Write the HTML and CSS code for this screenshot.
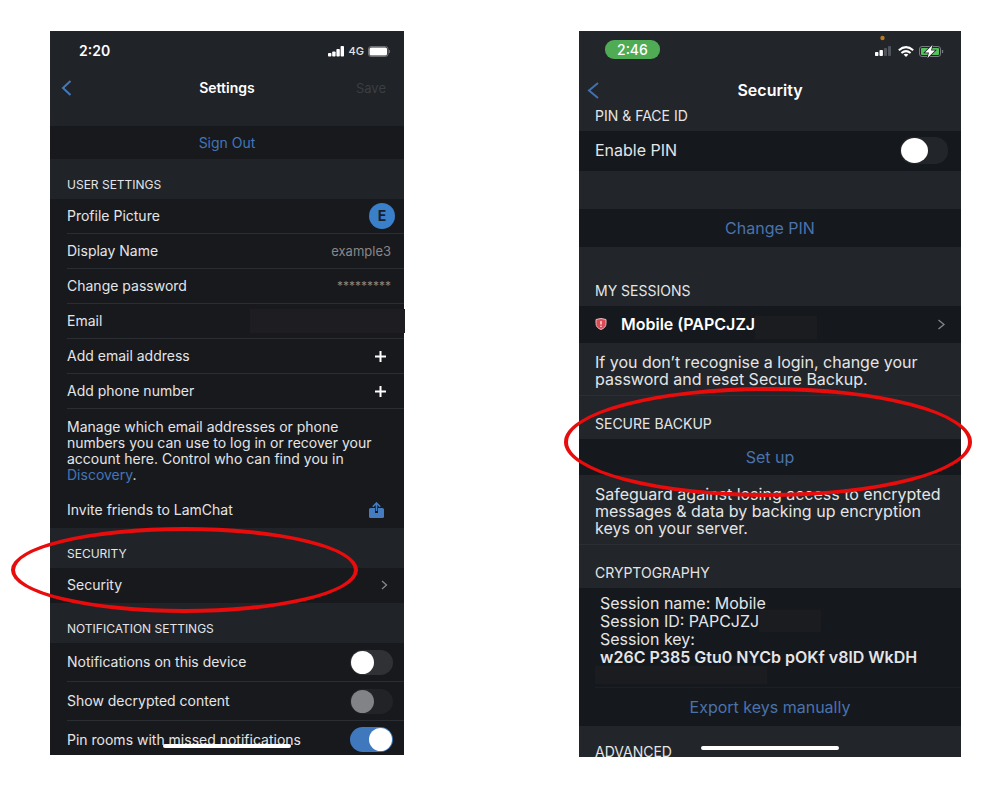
FILE: index.html
```
<!DOCTYPE html>
<html lang="en">
<head>
<meta charset="utf-8">
<meta name="viewport" content="width=device-width, initial-scale=1">
<title>Set up secure backup</title>
<link rel="stylesheet" href="styles.css">
</head>
<body>
<main class="guide">

  <section class="phone phone-settings" aria-label="Settings">
    <header class="top">
      <div class="status">
        <span class="clock">2:20</span>
        <span class="status-icons">
          <svg width="17" height="11" viewBox="0 0 17 11" fill="#fff" aria-hidden="true"><rect x="0" y="7" width="3.400" height="3.500" rx=".8"/><rect x="4.200" y="5.500" width="3.400" height="5" rx=".8"/><rect x="8.400" y="3" width="3.400" height="7.500" rx=".8"/><rect x="12.600" y="0" width="3.400" height="10.500" rx=".8"/></svg>
          <span class="network">4G</span>
          <svg width="23" height="11" viewBox="0 0 23 11" aria-hidden="true"><rect x=".5" y=".5" width="19.500" height="10" rx="2.500" fill="none" stroke="#6c6f72"/><rect x="1.500" y="1.500" width="17.500" height="8" rx="1.500" fill="#fff"/><path d="M21.300 4v3" stroke="#6c6f72" stroke-width="1.200"/></svg>
        </span>
      </div>
      <nav class="bar">
        <button class="plain back" aria-label="Back"><svg width="11" height="16" viewBox="0 0 11 16" fill="none" stroke="#4479ba" stroke-width="2"><path d="M9.500 1 2 8l7.500 7"/></svg></button>
        <h1 class="title">Settings</h1>
        <button class="plain save" disabled>Save</button>
      </nav>
    </header>
    <button class="plain action">Sign Out</button>

    <h2 class="heading">USER SETTINGS</h2>
    <div class="list">
      <div class="row"><span>Profile Picture</span><span class="avatar">E</span></div>
      <div class="row"><span>Display Name</span><span class="value">example3</span></div>
      <div class="row"><span>Change password</span><span class="value stars">*********</span></div>
      <div class="row"><span>Email</span><span class="hidden-email"></span></div>
      <button class="plain row"><span>Add email address</span><svg class="plus" width="11" height="11" viewBox="0 0 11 11" stroke="#fff" stroke-width="2" aria-hidden="true"><path d="M5.500 0v11M0 5.500h11"/></svg></button>
      <button class="plain row"><span>Add phone number</span><svg class="plus" width="11" height="11" viewBox="0 0 11 11" stroke="#fff" stroke-width="2" aria-hidden="true"><path d="M5.500 0v11M0 5.500h11"/></svg></button>
      <p class="note">Manage which email addresses or phone numbers you can use to log in or recover your account here. Control who can find you in <a class="link" href="#discovery">Discovery</a>.</p>
      <button class="plain row last"><span>Invite friends to LamChat</span><svg class="share" width="15" height="16" viewBox="0 0 15 16" aria-hidden="true"><rect x="0" y="6" width="15" height="10" rx="1.500" fill="#447cbf"/><path d="M7.500 5v6" stroke="#18191d" stroke-width="3"/><path d="M7.500 9V1.500M3.800 4.800 7.500 1l3.700 3.800" fill="none" stroke="#447cbf" stroke-width="1.600"/></svg></button>
    </div>

    <div class="circled">
      <h2 class="heading">SECURITY</h2>
      <div class="list"><button class="plain row last"><span>Security</span><svg class="chevron" width="7" height="10" viewBox="0 0 7 10" fill="none" stroke="#85888b" stroke-width="1.300" aria-hidden="true"><path d="m1 1 4.500 4L1 9"/></svg></button></div>
      <span class="ring ring-security"></span>
    </div>

    <h2 class="heading">NOTIFICATION SETTINGS</h2>
    <div class="list toggles">
      <label class="row"><span>Notifications on this device</span><input class="switch" type="checkbox" role="switch"></label>
      <label class="row"><span>Show decrypted content</span><input class="switch" type="checkbox" role="switch" disabled></label>
      <label class="row last"><span>Pin rooms with missed notifications</span><input class="switch" type="checkbox" role="switch" checked></label>
    </div>
    <span class="home"></span>
  </section>

  <section class="phone phone-security" aria-label="Security">
    <header class="top">
      <div class="status">
        <span class="clock pill">2:46</span>
        <span class="status-icons">
          <svg width="18" height="22" viewBox="0 0 18 22" aria-hidden="true"><circle cx="7.500" cy="3" r="2.200" fill="#b87a22"/><rect x="0" y="17" width="3.400" height="4" rx=".8" fill="#fff"/><rect x="4.500" y="15" width="3.400" height="6" rx=".8" fill="#fff"/><rect x="9" y="13" width="3" height="8" rx=".8" fill="#50545a"/><rect x="13" y="11" width="3" height="10" rx=".8" fill="#50545a"/></svg>
          <svg width="16" height="11" viewBox="0 0 16 11" fill="none" stroke="#fff" stroke-width="2" aria-hidden="true"><path d="M.8 4.200q7.200-6.100 14.400 0M3.400 7q4.600-3.800 9.200 0"/><path d="M5.600 8.600q2.400-1.800 4.800 0L8 11z" fill="#fff" stroke="none"/></svg>
          <svg width="25" height="13" viewBox="0 0 25 13" aria-hidden="true"><rect x=".5" y="1.500" width="21" height="10" rx="2.500" fill="none" stroke="#777b80"/><rect x="2" y="3" width="18" height="7" rx="1" fill="#55c35c"/><path d="M23.500 5v3" stroke="#777b80" stroke-width="1.300"/><path d="m13.500 0-7.500 7.500h4L8.500 13l7.500-7.500h-4z" fill="#fff" stroke="#22262b" stroke-width="1.600" paint-order="stroke"/></svg>
        </span>
      </div>
      <nav class="bar">
        <button class="plain back" aria-label="Back"><svg width="12" height="17" viewBox="0 0 12 17" fill="none" stroke="#4470ac" stroke-width="2"><path d="M11 1 2 8.500l9 7.500"/></svg></button>
        <h1 class="title">Security</h1>
      </nav>
    </header>
    <h2 class="heading heading-first">PIN &amp; FACE ID</h2>
    <div class="list pin-row"><label class="row last"><span>Enable PIN</span><input class="switch" type="checkbox" role="switch"></label></div>
    <button class="plain action spaced">Change PIN</button>

    <h2 class="heading heading-tall">MY SESSIONS</h2>
    <div class="list"><button class="plain row session last">
      <svg width="12" height="12" viewBox="0 0 12 12" aria-hidden="true"><path d="M1 1.500Q6-.5 11 1.500v4Q11 9.800 6 11.500 1 9.800 1 5.500z" fill="#dd4a55" stroke="#e4b9bc"/><path d="M6 3v3.500M6 7.800v1.200" stroke="#fff" stroke-width="1.200"/></svg>
      <strong>Mobile (PAPCJZJ</strong><span class="mask mask-name"></span>
      <svg class="chevron" width="7" height="11" viewBox="0 0 7 11" fill="none" stroke="#85888b" stroke-width="1.300" aria-hidden="true"><path d="m.5 1 5.500 4.500L.5 10"/></svg>
    </button></div>
    <p class="note">If you don’t recognise a login, change your password and reset Secure Backup.</p>

    <div class="circled">
      <h2 class="heading">SECURE BACKUP</h2>
      <button class="plain action">Set up</button>
      <span class="ring ring-backup"></span>
    </div>
    <p class="note">Safeguard against losing access to encrypted messages &amp; data by backing up encryption keys on your server.</p>

    <h2 class="heading">CRYPTOGRAPHY</h2>
    <div class="list">
      <div class="details">
        <p class="detail">Session name: Mobile</p>
        <p class="detail">Session ID: PAPCJZJ<span class="mask mask-id"></span></p>
        <p class="detail">Session key:</p>
        <p class="detail"><strong>w26C P385 Gtu0 NYCb pOKf v8lD WkDH</strong></p>
        <span class="mask mask-key"></span>
      </div>
      <button class="plain action">Export keys manually</button>
    </div>
    <h2 class="heading heading-end">ADVANCED</h2>
    <span class="home"></span>
  </section>

</main>
</body>
</html>
```
FILE: styles.css
```
* { box-sizing: border-box; }

body {
  margin: 0;
  background: #fff;
  font-family: Inter, "Liberation Sans", sans-serif;
}

h1, h2, p { margin: 0; font-weight: 400; }

.guide {
  display: grid;
  grid-template-columns: 354fr 382fr;
  column-gap: 175px;
  align-items: start;
  padding: 31px 44px 32px 50px;
}

.phone {
  position: relative;
  background: var(--panel);
  color: #e4e5e7;
  font-size: var(--text);
  line-height: var(--line);
}

.phone-settings {
  --panel: #202327;
  --row: #18191d;
  --rule: #2a2d31;
  --accent: #4276b7;
  --inset: 17px;
  --text: 14px;
  --line: 16px;
}

.phone-security {
  --panel: #22252a;
  --row: #15181d;
  --rule: #2b2e33;
  --accent: #4a73ac;
  --inset: 16px;
  --text: 16px;
  --line: 17px;
}

.plain {
  border: 0;
  padding: 0;
  background: none;
  color: inherit;
  font: inherit;
  text-align: left;
}

/* Status and navigation bars */
.top { display: flex; flex-direction: column; }
.status { display: flex; justify-content: space-between; align-items: center; height: 40px; padding: 0 13px 0 29px; }
.clock { font-size: 14px; font-weight: 600; color: #fff; }
.status-icons { display: flex; align-items: center; gap: 4px; }
.network { font-size: 11px; font-weight: 500; }

.bar { display: grid; grid-template-columns: 1fr auto 1fr; align-items: center; height: 33px; padding: 0 11px; }
.phone-settings .bar { margin-bottom: 22px; }
.back { display: flex; }
.title { font-size: var(--text); line-height: var(--line); font-weight: 600; color: #fff; }
.save { justify-self: end; margin-right: 7px; color: #3b3e42; font-size: 13px; }

.phone-security .status { padding: 0 17px 0 26px; }
.phone-security .status-icons { gap: 5px; }
.phone-security .status-icons svg:first-child { margin-bottom: 10px; }
.phone-security .bar { height: 39px; padding: 0 8px; }
.pill { margin-bottom: 4px; padding: 1px 12px; border-radius: 9px; background: #50ab55; font-weight: 500; }

/* Section parts */
.heading {
  display: flex;
  align-items: flex-end;
  height: 40px;
  padding: 0 var(--inset) 6px;
  font-size: 12px;
}
.list { background: var(--row); }
.row {
  display: flex;
  align-items: center;
  justify-content: space-between;
  width: calc(100% - var(--inset));
  height: 35px;
  margin-left: var(--inset);
  border-bottom: 1px solid var(--rule);
}
.row.last { border-bottom-color: transparent; }
.action {
  display: block;
  width: 100%;
  height: 33px;
  background: var(--row);
  color: var(--accent);
  text-align: center;
}
.link { color: var(--accent); text-decoration: none; }
.value { margin-right: 13px; color: #85888c; font-size: 13px; }
.stars { font-size: 12px; }
.avatar {
  width: 26px;
  height: 26px;
  margin-right: 9px;
  border-radius: 50%;
  background: #397fc9;
  color: #18202c;
  font-weight: 700;
  line-height: 26px;
  text-align: center;
}
.hidden-email { width: 46%; height: 24px; margin-right: -1px; background: #1e1d22; }
.plus { margin-right: 18px; }
.share { margin-right: 20px; }
.chevron { margin-right: 16px; }
.phone-settings .note { padding: 10px 20px 10px var(--inset); }

/* Switches */
.switch {
  appearance: none;
  display: flex;
  align-items: center;
  width: 43px;
  height: 25px;
  margin: 0 11px 0 0;
  padding: 0 1px;
  border-radius: 13px;
  background: #303135;
}
.switch::before { content: ""; width: 23px; height: 23px; border-radius: 50%; background: #fff; }
.switch:checked { justify-content: flex-end; background: #4078bd; }
.switch:disabled { background: #222327; }
.switch:disabled::before { background: #828386; }
.toggles .row { height: 39px; }
.toggles .row.last { height: 34px; padding-top: 4px; }

/* Security screen */
.phone-security .heading { height: 43px; padding-bottom: 7px; font-size: 14px; }
.phone-security .heading-first { height: 21px; }
.phone-security .heading-tall { height: 59px; }
.phone-security .heading-end { height: 31px; padding-bottom: 0; line-height: 10px; }
.phone-security .row { height: 37px; }
.phone-security .pin-row .row { height: 40px; }
.phone-security .action { height: 38px; }
.phone-security .spaced { margin-top: 38px; }
.phone-security .circled .action { height: 36px; }
.phone-security .switch { width: 48px; height: 27px; margin-right: 13px; background: #222529; }
.phone-security .switch::before { width: 27px; height: 25px; }
.phone-security .note { padding: 11px 16px 7px var(--inset); border-bottom: 1px solid var(--rule); }
.phone-security .session strong { margin-left: 14px; color: #fff; }
.phone-security strong { font-weight: 600; }
.session .chevron { margin-left: auto; }
.details { margin-left: var(--inset); padding: 6px 0 3px; border-bottom: 1px solid #1c1f24; }
.detail { display: flex; padding-left: 5px; line-height: 18px; }
.mask { display: block; background: #1a1c20; }
.mask-name { width: 62px; height: 23px; margin-top: 7px; }
.mask-id { width: 62px; height: 22px; margin: -2px 0; }
.mask-key { width: 172px; height: 18px; }

/* Red outlines around the highlighted sections */
.circled { position: relative; }
.ring { position: absolute; z-index: 1; border: 4px solid #e80c0c; border-radius: 50%; pointer-events: none; }
.ring-security { left: -11%; top: -1px; width: 98%; height: 86px; }
.ring-backup { left: -4%; top: -9px; width: 107%; height: 110px; }

.home {
  position: absolute;
  bottom: 7px;
  left: 50%;
  width: 36%;
  height: 4px;
  margin-left: -18%;
  border-radius: 3px;
  background: #fff;
}
```
